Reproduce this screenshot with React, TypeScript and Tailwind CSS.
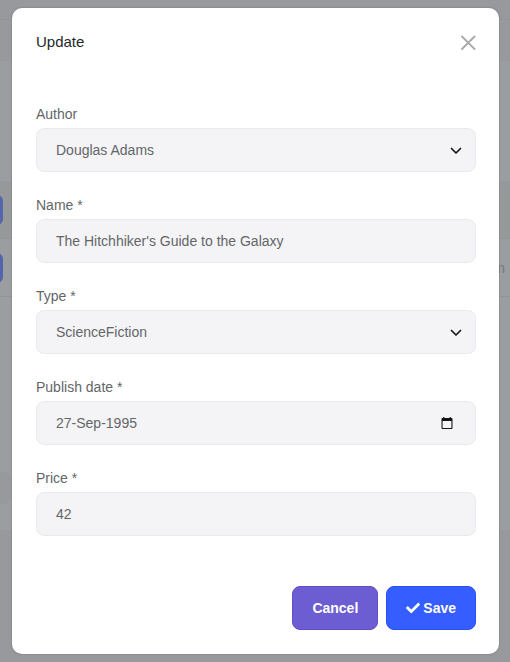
import { useState } from "react";
import type { ReactNode } from "react";

const control =
  "h-11 w-full appearance-none rounded-lg border border-[#e9eaee] bg-[#f4f4f6] pl-[19px] pr-10 text-sm text-[#636669] outline-none focus:border-[#c5cbe9]";

function Field({ id, label, children }: { id: string; label: string; children: ReactNode }) {
  return (
    <div className="flex flex-col gap-1">
      <label htmlFor={id} className="text-sm leading-5 text-[#636669]">
        {label}
      </label>
      <div className="relative">{children}</div>
    </div>
  );
}

function Chevron() {
  return (
    <svg
      className="pointer-events-none absolute top-4 right-[14px] h-3 w-3"
      viewBox="0 0 12 12"
      fill="none"
      stroke="#15191c"
      strokeWidth="1.7"
      strokeLinecap="round"
      strokeLinejoin="round"
      aria-hidden="true"
    >
      <path d="M1.500 4.500 6 9l4.500-4.500" />
    </svg>
  );
}

function Backdrop() {
  return (
    <div className="flex min-h-screen flex-col overflow-hidden bg-[#97999c] text-sm" aria-hidden="true">
      <div className="h-5 border-b border-[#929497]" />
      <div className="h-[41px]" />
      <div className="h-[120px] bg-[#9b9ea0]" />
      <div className="flex h-[58px] items-center border-b border-[#929497] bg-[#96999a]">
        <div className="-ml-5 h-[30px] w-[23px] rounded-md bg-[#5565ab]" />
      </div>
      <div className="flex h-[58px] items-center justify-between border-b border-[#929497] bg-[#9b9ea0]">
        <div className="-ml-5 h-[30px] w-[23px] rounded-md bg-[#5565ab]" />
        <span className="pr-[5px] text-[#75777a]">n</span>
      </div>
      <div className="flex h-[233px] items-end bg-[#9b9ea0] pb-[26px]">
        <div className="h-8 w-[11px] rounded-r-lg bg-[#97999c]" />
      </div>
      <div className="grow" />
    </div>
  );
}

export default function App() {
  const [author, setAuthor] = useState("Douglas Adams");
  const [type, setType] = useState("ScienceFiction");

  return (
    <div className="relative min-h-screen font-['Liberation_Sans',Arial,sans-serif]">
      <Backdrop />
      <div className="absolute inset-0 pt-2 pr-[11px] pl-3">
        <form
          role="dialog"
          aria-labelledby="dialog-title"
          onSubmit={(e) => e.preventDefault()}
          className="rounded-[10px] bg-white py-6 pr-[23px] pl-6 shadow-[0_0_1px_1px_rgba(70,74,78,0.15)]"
        >
          <header className="flex h-5 items-center justify-between">
            <h1 id="dialog-title" className="text-[15px] leading-5 text-[#25282b]">
              Update
            </h1>
            <button type="button" aria-label="Close" className="text-[#a9abad]">
              <svg className="h-4 w-4" viewBox="0 0 16 16" fill="none" stroke="currentColor" strokeWidth="1.9" strokeLinecap="round">
                <path d="m2 2.500 12.500 12.500m0-12.500L2 15" />
              </svg>
            </button>
          </header>

          <div className="flex flex-col gap-[23px] pt-[52px]">
            <Field id="author" label="Author">
              <select id="author" value={author} onChange={(e) => setAuthor(e.target.value)} className={control}>
                <option>Douglas Adams</option>
                <option>George Orwell</option>
              </select>
              <Chevron />
            </Field>
            <Field id="name" label="Name *">
              <input id="name" required defaultValue="The Hitchhiker's Guide to the Galaxy" className={control} />
            </Field>
            <Field id="type" label="Type *">
              <select id="type" required value={type} onChange={(e) => setType(e.target.value)} className={control}>
                <option>ScienceFiction</option>
                <option>Dystopia</option>
              </select>
              <Chevron />
            </Field>
            <Field id="publish-date" label="Publish date *">
              <input id="publish-date" required defaultValue="27-Sep-1995" className={control} />
              <button type="button" aria-label="Choose date" className="absolute top-4 right-[23px]">
                <svg className="block h-3 w-3" viewBox="0 0 12 12" aria-hidden="true">
                  <path
                    fill="#111417"
                    fillRule="evenodd"
                    d="M2.200 0h1.200v1h5.200V0h1.200v1h.7A1 1 0 0 1 11.500 2v9a1 1 0 0 1-1 1h-9a1 1 0 0 1-1-1V2a1 1 0 0 1 1-1h.7ZM1.600 4v6.900h8.800V4Z"
                  />
                </svg>
              </button>
            </Field>
            <Field id="price" label="Price *">
              <input id="price" required inputMode="decimal" defaultValue="42" className={control} />
            </Field>
          </div>

          <footer className="flex justify-end gap-2 pt-[50px] text-sm font-bold text-white">
            <button type="button" className="h-11 rounded-lg border border-[#604dca] bg-[#6c5dd3] px-[19px]">
              Cancel
            </button>
            <button
              type="submit"
              className="flex h-11 items-center gap-[3px] rounded-lg border border-[#2850f5] bg-[#355dff] px-[19px]"
            >
              <svg className="h-[14px] w-[14px]" viewBox="0 0 512 512" fill="currentColor" aria-hidden="true">
                <path d="M173.898 439.404l-166.400-166.400c-9.997-9.997-9.997-26.206 0-36.204l36.203-36.204c9.997-9.998 26.207-9.998 36.204 0L192 312.690 432.095 72.596c9.997-9.997 26.207-9.997 36.204 0l36.203 36.204c9.997 9.997 9.997 26.206 0 36.204l-294.400 294.401c-9.998 9.997-26.207 9.997-36.204-.001z" />
              </svg>
              Save
            </button>
          </footer>
        </form>
      </div>
    </div>
  );
}
